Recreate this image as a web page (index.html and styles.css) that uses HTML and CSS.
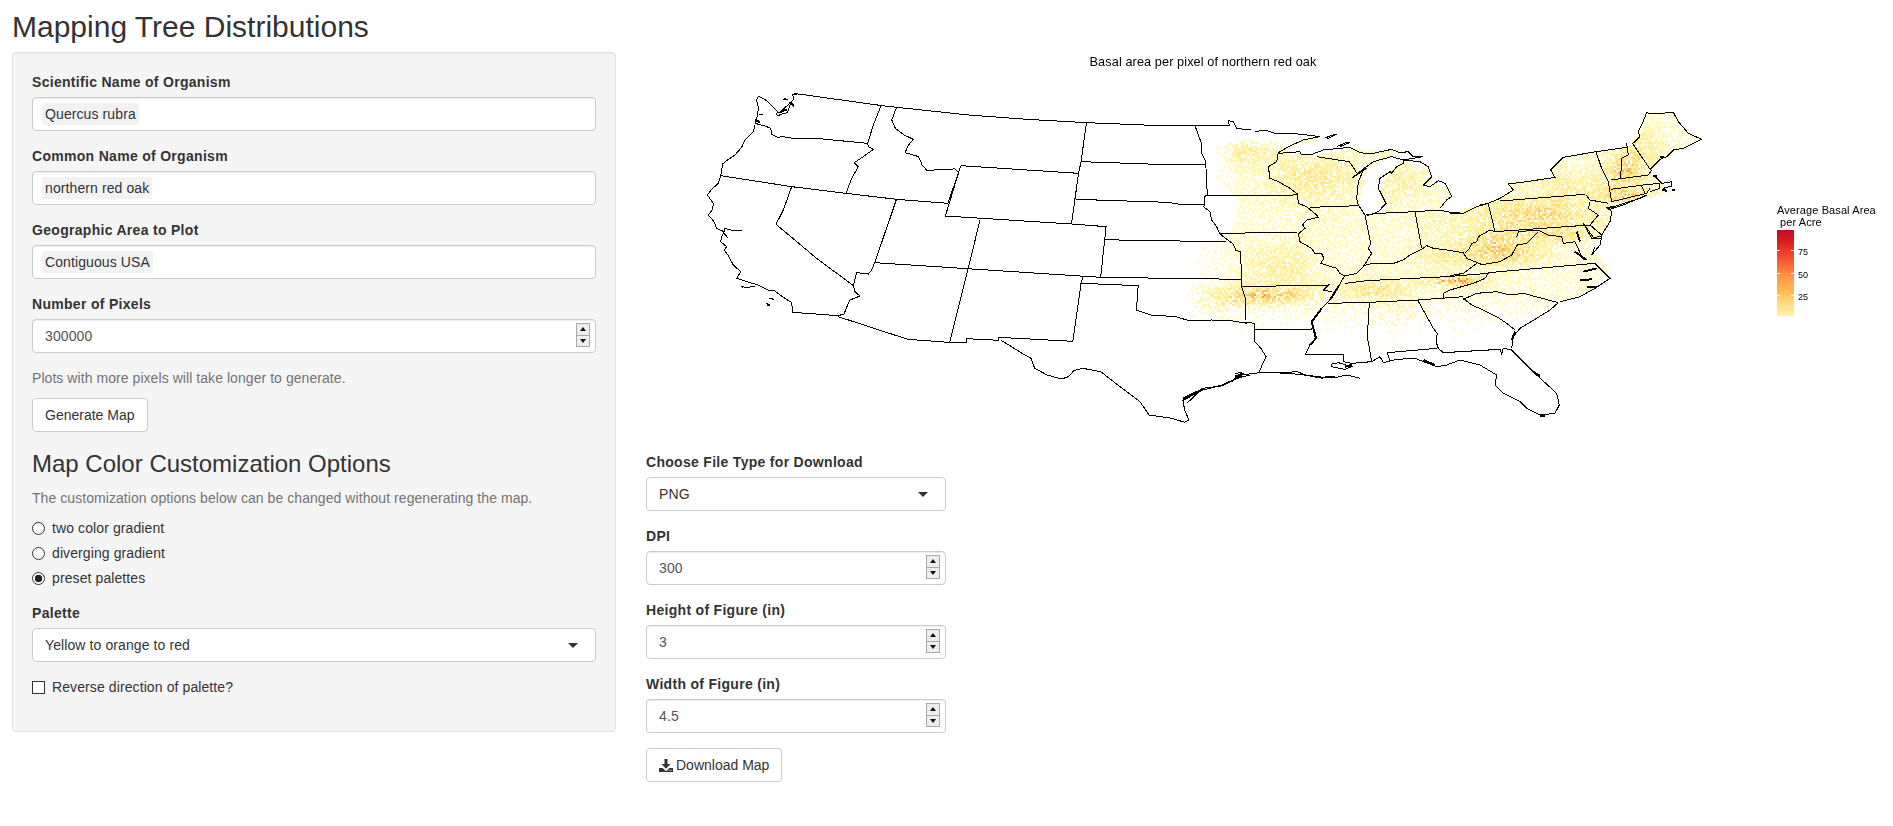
FILE: index.html
```html
<!DOCTYPE html>
<html lang="en">
<head>
<meta charset="utf-8">
<title>Mapping Tree Distributions</title>
<link rel="stylesheet" href="styles.css">
</head>
<body>
<h2 class="page-title">Mapping Tree Distributions</h2>
<div class="layout">
  <aside class="well">
    <div class="form-group">
      <div class="field-label">Scientific Name of Organism</div>
      <div class="control"><span class="chip">Quercus rubra</span></div>
    </div>
    <div class="form-group">
      <div class="field-label">Common Name of Organism</div>
      <div class="control"><span class="chip">northern red oak</span></div>
    </div>
    <div class="form-group">
      <div class="field-label">Geographic Area to Plot</div>
      <div class="control"><span class="chip">Contiguous USA</span></div>
    </div>
    <div class="form-group">
      <div class="field-label">Number of Pixels</div>
      <div class="control number">300000<span class="spin"><span class="spin-btn"><i class="up"></i></span><span class="spin-btn"><i class="down"></i></span></span></div>
    </div>
    <p class="help">Plots with more pixels will take longer to generate.</p>
    <button class="btn" type="button">Generate Map</button>
    <h3 class="section-title">Map Color Customization Options</h3>
    <p class="help">The customization options below can be changed without regenerating the map.</p>
    <div class="radios">
      <label class="choice"><input type="radio" name="mode" class="radio">two color gradient</label>
      <label class="choice"><input type="radio" name="mode" class="radio">diverging gradient</label>
      <label class="choice"><input type="radio" name="mode" class="radio" checked>preset palettes</label>
    </div>
    <div class="form-group">
      <div class="field-label">Palette</div>
      <div class="control select">Yellow to orange to red</div>
    </div>
    <label class="choice"><input type="checkbox" class="check">Reverse direction of palette?</label>
  </aside>
  <main class="main">
    <div class="plot">
      <canvas id="heat" class="heat" width="1247" height="400"></canvas>
      <svg class="map" viewBox="646 52 1247 400" width="1247" height="400" xmlns="http://www.w3.org/2000/svg">
        <defs>
          <linearGradient id="ramp" x1="0" y1="0" x2="0" y2="1">
            <stop offset="0" stop-color="#bd0f26"/>
            <stop offset=".12" stop-color="#d7191f"/>
            <stop offset=".27" stop-color="#f0402a"/>
            <stop offset=".42" stop-color="#fc6e33"/>
            <stop offset=".55" stop-color="#fd9a43"/>
            <stop offset=".7" stop-color="#feb950"/>
            <stop offset=".85" stop-color="#fedb80"/>
            <stop offset="1" stop-color="#fff3a8"/>
          </linearGradient>
        </defs>
        <text class="plot-title" x="1203" y="66" text-anchor="middle">Basal area per pixel of northern red oak</text>
        <g transform="translate(700 90) scale(.33333)">
          <path class="line" d="M290 12L277 14L282 25L275 35L268 50L262 68L245 72L232 78L228 70L240 66L258 50L272 38L282 48M235 68L200 32L175 18L169 30L175 50L173 75L165 95L172 103M178 75L190 75M165 100L195 108L212 115L215 133L232 142L250 140L290 147L370 147L420 152L503 160M165 105L160 125L135 150L125 172L105 195L80 212L68 222L65 240L62 257L275 290L438 310L590 328M62 257L55 280L35 298L22 315L40 340L38 358L25 375L42 395L50 415L72 425L65 440L62 455L80 470L72 480L85 497L100 525L122 545L110 565L140 575L175 585L205 600L225 603L240 615L275 638L278 667L415 677L432 672L440 652L450 630L480 618L465 605L460 585M72 425L75 415L92 420L125 423M72 430L85 445M122 588L135 592L165 590M122 588L130 593M208 625L222 628M200 640L210 645L204 647L200 640M228 403L250 360L275 290M228 403L350 505L460 587L470 548L505 552L515 540L525 515L590 328M503 160L505 170L520 178L490 200L463 218L475 230L455 265L438 310M543 47L520 105L503 160M255 25L260 28L252 28Z"/>
          <path class="thick" d="M268 36L282 48M240 66L262 58M168 90L180 98"/>
        </g>
        <g transform="translate(690 40) scale(.35714 .33333)">
          <path class="line" d="M290 160L545 198L780 225L945 238L1110 248L1295 256L1510 256L1508 242L1522 245L1530 265L1570 270M578 203L565 240L575 265L600 285L625 298L612 315L602 338L625 345L640 350L650 375L665 393L700 387L733 390L740 385L752 398L722 490M758 377L1088 400M1110 248L1095 365L1088 400L1068 552M1095 365L1310 373L1445 375M1080 478L1340 487L1380 495L1440 495M758 377L715 528L1068 552L1165 560L1150 712M578 478L722 490M812 540L778 690L727 907M578 478L517 668L1150 712L1545 718M1162 598L1240 602L1500 604M1100 712L1095 730L1255 737L1250 810L1290 825L1360 830L1400 843L1460 840L1520 843L1560 850M1095 730L1072 904L865 892L865 901L775 896L775 909L725 907L610 898L415 830M870 900L930 940L955 955L965 985L1000 1005L1040 1017L1060 1010L1075 992L1100 985L1150 995L1210 1045L1260 1085L1285 1125L1350 1135L1385 1147L1397 1140L1385 1110L1380 1080L1420 1055L1490 1035L1530 1015L1568 1005M1525 1000L1545 998L1540 1012"/>
          <path class="thick" d="M1380 1080L1440 1045M1520 1020L1545 1008"/>
        </g>
        <g transform="translate(1180 90) scale(.34435 .33333)">
          <path class="line" d="M190 697L217 700L217 755L235 775L250 800L238 825L230 848L300 848L340 845L365 855L395 862L450 860M217 720L385 717M20 940L65 895L120 888L155 872L180 855L230 848"/>
          <path class="thick" d="M10 925L65 898M160 860L185 850"/>
        </g>
        <g transform="translate(1200 110) scale(.33333)">
          <path class="line" d="M165 65L195 60L225 70L260 72L295 72L360 80L310 90L265 110L235 128L230 155L205 170L210 205L235 215L270 235L292 252L295 280L320 290L350 315L355 322L320 330L308 345L315 355L295 372L300 395L335 415L345 430L365 432L372 445L362 460L410 475L420 490L435 498L470 490L490 470L515 430L505 415L512 400L495 315L475 285L470 265L475 215L495 170M-15 47L3 97L5 130L15 150L18 175L22 255L15 260L15 285L10 290L30 305L35 330L50 350L60 372L100 402L108 422L122 425L125 530L135 560L137 630M15 256L292 255M330 292L478 287M60 370L290 367M125 530L385 525L380 530L370 540L395 545M497 315L535 310L645 305L720 300L755 308L790 310L830 290L865 280M645 305L665 415M490 470L497 465L520 460L575 462L610 450L630 435L665 418L680 407L700 415L740 420L790 428L800 445L850 465M795 428L805 420L815 400L830 395L835 380L870 360L885 365M830 460L790 490L750 497M235 130L300 125L305 135L330 135L370 120L420 115L450 112L480 128L510 132L575 118L600 128L625 125L640 140L670 140L610 150L575 140L520 155L480 185L455 205L500 175M350 140L415 150L448 155L465 180L470 190M410 110L440 97L450 97L420 110M378 82L410 72L385 85Z M500 318L535 305L558 280L535 235L540 205L570 185L575 190L590 170L610 160L610 150L660 155L685 170L695 200L670 225L690 230L715 212L735 220L755 260L740 270L720 295"/>
          <path class="thick" d="M750 308L780 310"/>
        </g>
        <g transform="translate(1280 250) scale(.33333)">
          <path class="line" d="M195 75L175 110L150 150L125 175L95 215L108 265L90 285L75 315L190 315L190 335L215 340L275 335L300 320L310 338L350 328L405 325L470 350L500 345L540 330L600 345L650 375L645 405L670 430L720 455L740 475L780 495L825 490L838 465L830 430L770 375L695 300L670 295L665 312L660 298L490 308L475 295L468 275L472 250L460 235L413 150M0 240L95 237M0 372L45 372L100 378L130 383L170 382L200 375L240 385M155 342L175 338L215 350L195 358L155 350Z M322 308L470 295M322 308L330 335M268 157L262 260L275 335M145 160L268 157L413 150L550 140M550 145L575 165L610 180L650 200L680 220L705 240M695 295L700 260L720 235L770 205L810 180L835 158M550 148L590 130L650 125L690 135L730 130L835 158M490 145L490 130L510 120L580 100L615 85L625 70M195 100L260 92L500 80L625 70"/>
          <path class="thick" d="M175 110L150 150M125 175L95 215L108 265L90 285M695 270L705 245M760 365L780 378M780 497L795 498M110 380L130 384M195 350L215 345M430 330L465 345"/>
        </g>
        <g transform="translate(1480 100) scale(.33333)">
          <path class="line" d="M460 130L480 110L475 95L485 75L500 38L520 42L580 37L595 65L625 100L665 118L640 130L610 145L580 150L560 170L540 178L510 208M458 130L510 208M440 130L445 165L425 175L422 235M348 155L365 205L385 245L395 305M348 155L440 142M392 240L505 225L515 210M392 268L490 255L540 250L540 265L510 275M520 225L545 250L575 245L575 258L550 265M395 305L500 280L510 265M485 258L495 280M385 325L480 295L500 285L430 315L385 330M380 322L395 335L390 365L365 405L330 375L355 345L325 325L330 305M318 285L330 300L385 310M60 303L315 283M0 315L25 310L60 295L100 270L85 252L140 245L225 232L212 210L250 172L348 155M25 312L45 395L330 375M110 410L115 395L175 390L205 405L245 410L250 430L285 425L310 480M310 370L340 412L365 410L360 435L335 465L345 440M310 370L335 415L365 415M0 495L60 485L95 465L112 435L140 430L175 395M25 518L345 490L390 535L345 565L300 590L240 605"/>
          <path class="thick" d="M290 395L300 425M285 455L320 480M310 515L350 505M300 540L335 538M320 560L350 560M540 172L552 170M520 228L530 228M545 270L560 272M575 270L585 270M380 325L400 320"/>
        </g>
        <rect x="1777" y="230" width="17" height="86" fill="url(#ramp)"/>
        <path class="tick" d="M1777 250.5h3M1791 250.5h3M1777 273.5h3M1791 273.5h3M1777 295.5h3M1791 295.5h3"/>
        <text class="legend-title" x="1777" y="214">Average Basal Area</text>
        <text class="legend-title" x="1780" y="226">per Acre</text>
        <text class="legend-label" x="1798" y="255">75</text>
        <text class="legend-label" x="1798" y="278">50</text>
        <text class="legend-label" x="1798" y="300">25</text>
      </svg>
    </div>
    <div class="form-group short">
      <div class="field-label">Choose File Type for Download</div>
      <div class="control select">PNG</div>
    </div>
    <div class="form-group short">
      <div class="field-label">DPI</div>
      <div class="control number">300<span class="spin"><span class="spin-btn"><i class="up"></i></span><span class="spin-btn"><i class="down"></i></span></span></div>
    </div>
    <div class="form-group short">
      <div class="field-label">Height of Figure (in)</div>
      <div class="control number">3<span class="spin"><span class="spin-btn"><i class="up"></i></span><span class="spin-btn"><i class="down"></i></span></span></div>
    </div>
    <div class="form-group short">
      <div class="field-label">Width of Figure (in)</div>
      <div class="control number">4.5<span class="spin"><span class="spin-btn"><i class="up"></i></span><span class="spin-btn"><i class="down"></i></span></span></div>
    </div>
    <button class="btn" type="button"><svg class="icon" viewBox="0 0 14 13" width="14" height="13" xmlns="http://www.w3.org/2000/svg"><path d="M5.5 0h3v5h3L7 9.8 2.5 5h3zM0 9h3.6L7 12.2 10.4 9H14v4H0zM9.5 10.8v1h1v-1zm2 0v1h1v-1z" fill-rule="evenodd"/></svg>Download Map</button>
  </main>
</div>
<script src="map.js"></script>
</body>
</html>
```
FILE: styles.css
```css
* { box-sizing: border-box; }
html, body { margin: 0; padding: 0; background: #fff; overflow: hidden; }
body {
  font-family: "Liberation Sans", Arial, sans-serif;
  font-size: 14px;
  line-height: 20px;
  letter-spacing: .1px;
  color: #333;
  padding: 10px 0 0 12px;
}
.page-title {
  font-size: 30px;
  font-weight: 400;
  line-height: 33px;
  letter-spacing: 0;
  margin: 0 0 9px;
}
.layout { display: flex; gap: 30px; align-items: flex-start; }
.well {
  width: 604px;
  flex: none;
  padding: 19px;
  height: 680px;
  background: #f5f5f5;
  border: 1px solid #e3e3e3;
  border-radius: 4px;
  box-shadow: inset 0 1px 1px rgba(0,0,0,.05);
}
.main { flex: 1; min-width: 0; }
.form-group { margin-bottom: 15px; }
.form-group.short { width: 300px; }
.field-label { font-weight: 700; margin-bottom: 5px; letter-spacing: .3px; }
.control {
  position: relative;
  display: flex;
  align-items: center;
  height: 34px;
  padding: 0 12px;
  background: #fff;
  border: 1px solid #ccc;
  border-radius: 4px;
  box-shadow: inset 0 1px 1px rgba(0,0,0,.075);
}
.control.number { color: #555; }
.control.select { box-shadow: none; }
.control.select::after {
  content: "";
  position: absolute;
  right: 17px;
  top: 14px;
  border: 5px solid transparent;
  border-top-color: #333;
  border-bottom-width: 0;
}
.chip {
  display: block;
  height: 22px;
  line-height: 22px;
  margin-left: -3px;
  padding: 0 3px;
  background: #f2f2f2;
  border-radius: 3px;
}
.spin {
  position: absolute;
  right: 5px;
  top: 3px;
  display: flex;
  flex-direction: column;
  width: 14px;
  height: 24px;
  border: 1px solid #a9a9a9;
  background: #a9a9a9;
  gap: 1px;
}
.spin-btn {
  flex: 1;
  display: flex;
  align-items: center;
  justify-content: center;
  background: #eee;
}
.up, .down { display: block; border: 3.5px solid transparent; }
.up { border-top-width: 0; border-bottom: 4px solid #111; }
.down { border-bottom-width: 0; border-top: 4px solid #111; }
.help { margin: 0 0 10px; color: #737373; letter-spacing: .06px; }
.btn {
  display: inline-flex;
  align-items: center;
  height: 34px;
  padding: 0 12px;
  font: inherit;
  letter-spacing: 0;
  color: #333;
  background: #fff;
  border: 1px solid #ccc;
  border-radius: 4px;
}
.icon { fill: #333; margin-right: 3px; flex: none; }
.section-title {
  font-size: 24px;
  font-weight: 400;
  line-height: 26.4px;
  letter-spacing: 0;
  margin: 19px 0 11px;
}
.radios { display: flex; flex-direction: column; gap: 5px; margin-bottom: 15px; }
.choice { display: flex; align-items: center; gap: 7px; font-weight: 400; }
.radio, .check {
  appearance: none;
  width: 13px;
  height: 13px;
  margin: 0;
  background: #fff;
  border: 1px solid #333;
  flex: none;
}
.radio { border-radius: 50%; }
.radio:checked { background: radial-gradient(circle, #222 0 3.5px, #fff 4px); }
.check { border-radius: 0; }
.plot { position: relative; height: 400px; }
.heat, .map { position: absolute; left: 0; top: 0; }
.plot-title { font-size: 12.7px; fill: #000; }
.line { fill: none; stroke: #000; stroke-width: 1; vector-effect: non-scaling-stroke; shape-rendering: crispEdges; }
.thick { fill: none; stroke: #000; stroke-width: 2; vector-effect: non-scaling-stroke; shape-rendering: crispEdges; }
.tick { stroke: #fff; stroke-width: 1; fill: none; }
.legend-title { font-size: 11px; fill: #000; }
.legend-label { font-size: 9px; fill: #000; }
```
FILE: map.js
```js
// Paints the noisy basal-area raster under the state outlines.
(function () {
  var canvas = document.getElementById('heat');
  var ctx = canvas.getContext('2d');
  var OX = 646, OY = 52, CELL = 2;
  var seed = 12345;
  function rnd() {
    seed = (seed * 1664525 + 1013904223) % 4294967296;
    return seed / 4294967296;
  }
  function clamp(v) { return Math.min(1, Math.max(0, v)); }
  var region = [[1216,140],[1290,137],[1318,138],[1280,153],[1300,152],[1310,155],[1340,150],[1350,147],[1375,150],[1400,150],[1403,160],[1430,168],[1432,183],[1440,182],[1452,195],[1440,208],[1450,212],[1480,203],[1500,197],[1510,192],[1510,180],[1555,176],[1552,170],[1563,157],[1596,152],[1626,147],[1640,130],[1645,112],[1660,112],[1673,112],[1690,133],[1701,139],[1680,150],[1660,160],[1650,172],[1660,180],[1672,192],[1655,195],[1610,205],[1607,225],[1600,235],[1590,245],[1610,270],[1590,290],[1555,305],[1525,320],[1500,320],[1470,335],[1420,345],[1380,352],[1320,350],[1260,345],[1220,330],[1190,315],[1185,300],[1197,270],[1197,246],[1230,232],[1240,200],[1215,175]];
  var lake = [[1358,205],[1365,170],[1375,165],[1405,148],[1403,160],[1390,170],[1380,190],[1378,202],[1386,203],[1384,212],[1370,216],[1365,216]];
  var blobs = [
    [1245,150,26,14,.22],[1300,178,34,24,.2],[1330,175,30,25,.13],[1270,295,42,9,.46],[1280,265,34,22,.22],[1225,300,32,14,.17],
    [1395,180,28,20,.2],[1535,215,62,18,.4],[1490,245,28,16,.38],[1555,235,40,8,.22],[1455,280,28,5,.66],[1520,255,28,10,.28],
    [1375,290,32,13,.33],[1445,255,32,12,.2],[1625,170,22,18,.44],[1640,145,22,18,.2],[1625,195,28,8,.35],[1570,185,40,14,.2],
    [1395,320,26,16,.18],[1330,225,30,18,.06],[1430,225,30,20,.08]
  ];
  var stops = [[0,255,255,240],[.22,255,250,195],[.5,255,234,150],[.75,254,208,112],[1,248,140,70]];
  function inside(poly, x, y) {
    var hit = false;
    for (var i = 0, j = poly.length - 1; i < poly.length; j = i++) {
      var a = poly[i], b = poly[j];
      if ((a[1] > y) !== (b[1] > y) && x < (b[0] - a[0]) * (y - a[1]) / (b[1] - a[1]) + a[0]) hit = !hit;
    }
    return hit;
  }
  function colour(t) {
    t = clamp(t);
    for (var i = 1; i < stops.length; i++) {
      if (t <= stops[i][0]) {
        var a = stops[i - 1], b = stops[i], k = (t - a[0]) / (b[0] - a[0]);
        return 'rgb(' + [1, 2, 3].map(function (n) { return Math.round(a[n] + (b[n] - a[n]) * k); }).join(',') + ')';
      }
    }
    return 'rgb(248,140,70)';
  }
  ctx.translate(-OX, -OY);
  for (var y = 100; y < 360; y += CELL) {
    for (var x = 1170; x < 1710; x += CELL) {
      if (!inside(region, x, y) || inside(lake, x, y)) continue;
      var f = .16;
      blobs.forEach(function (b) {
        var dx = (x - b[0]) / b[2], dy = (y - b[1]) / b[3];
        f += b[4] * Math.exp(-(dx * dx + dy * dy));
      });
      var fade = y > 290 ? Math.max(.05, 1 - (y - 290) / 45) : 1;
      if (y < 175 && x < 1300) fade *= clamp((x - 1212) / 22) * clamp((y - 138) / 14 + .2);
      if (y >= 175 && y < 285 && x < 1245) fade *= .25 + .75 * clamp((x - 1197) / 45);
      if (y >= 285 && x < 1215) fade *= .4 + .6 * clamp((x - 1185) / 30);
      var density = Math.min(.88, (.55 + f) * fade);
      if (rnd() > density) continue;
      var t = f * (.5 + rnd()) * (fade < 1 ? .6 + fade * .4 : 1);
      ctx.fillStyle = colour(t);
      ctx.fillRect(x, y, CELL, CELL);
    }
  }
})();
```
